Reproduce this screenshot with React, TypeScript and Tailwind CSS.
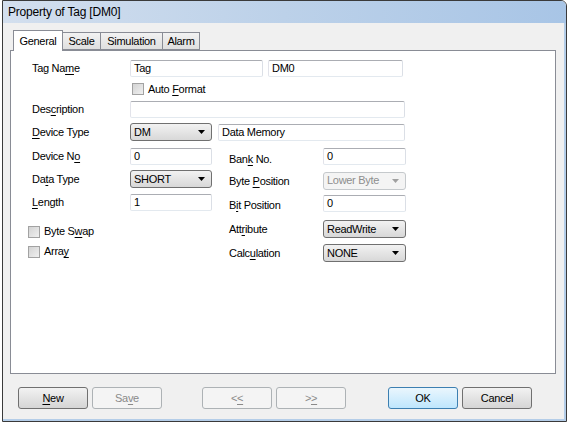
import React from 'react';

const font = "font-['Liberation_Sans',Arial,sans-serif] text-[11px] leading-[13px] tracking-[-0.3px] text-black";

const U: React.FC<{ children: React.ReactNode }> = ({ children }) => (
  <span className="underline underline-offset-[2px]">{children}</span>
);

const TextBox: React.FC<{ value?: string; w: string }> = ({ value = '', w }) => (
  <div className={`${w} h-[17px] bg-white border border-[#abadb3] border-b-[#e3e9ef] border-l-[#e2e3ea] border-r-[#dbdfe6] rounded-[2px] flex items-center pl-[3px]`}>
    {value}
  </div>
);

const Combo: React.FC<{ value: string; w: string; disabled?: boolean }> = ({ value, w, disabled }) => (
  <div
    className={`${w} h-[18px] rounded-[3px] border flex items-center justify-between pl-[3px] pr-[6px] ${
      disabled
        ? 'border-[#c5c9cc] bg-[#f4f4f4] text-[#8d8d8d]'
        : 'border-[#707070] bg-gradient-to-b from-[#f2f2f2] to-[#d8d8d8]'
    }`}
  >
    <span>{value}</span>
    <svg width="7" height="4" viewBox="0 0 7 4">
      <path d="M0 0h7L3.5 4z" fill={disabled ? '#a0a0a0' : '#000'} />
    </svg>
  </div>
);

const Check: React.FC<{ children: React.ReactNode }> = ({ children }) => (
  <div className="flex items-center gap-[4px]">
    <div className="w-[12px] h-[12px] border border-[#a2a2a2] bg-gradient-to-br from-[#d3d3d3] to-[#f0f0f0]" />
    <span>{children}</span>
  </div>
);

const Btn: React.FC<{ children: React.ReactNode; kind?: 'normal' | 'disabled' | 'default' }> = ({ children, kind = 'normal' }) => {
  const cls =
    kind === 'disabled'
      ? 'border-[#adb2b5] bg-[#f4f4f4] text-[#8a8a8a]'
      : kind === 'default'
      ? 'border-[#3c7fb1] bg-gradient-to-b from-[#eaf6fd] to-[#bee6fd]'
      : 'border-[#707070] bg-gradient-to-b from-[#f2f2f2] to-[#d5d5d5]';
  return (
    <div className={`w-[70px] h-[22px] rounded-[3px] border flex items-center justify-center ${cls}`}>{children}</div>
  );
};

const tab = 'h-[18px] border border-[#898c95] border-l-0 bg-gradient-to-b from-[#f2f2f2] to-[#dfdfdf] flex items-center justify-center';

export default function App() {
  return (
    <div className={`w-[570px] h-[425px] bg-white overflow-hidden ${font}`}>
      <div className="ml-[2px] w-[565px] h-[422px] border border-[#3a3a3a] rounded-tr-[6px] overflow-hidden flex flex-col">
        <div className="h-[22px] shrink-0 bg-gradient-to-r from-[#d3dfee] via-[#bcd1e9] to-[#a8c5e6] flex items-center pl-[5px] text-[12px] tracking-[-0.2px]">
          Property of Tag [DM0]
        </div>
        <div className="flex-1 bg-[#f0f0f0] border-r-2 border-b-2 border-[#b4cde8] flex flex-col">
          {/* tabs */}
          <div className="h-[27px] pl-[10px] flex items-end">
            <div className="relative z-10 -mb-px w-[50px] h-[21px] bg-white border border-[#898c95] border-b-0 flex items-center justify-center">
              General
            </div>
            <div className={`w-[38px] ${tab}`}>Scale</div>
            <div className={`w-[62px] ${tab}`}>Simulation</div>
            <div className={`w-[37px] ${tab}`}>Alarm</div>
          </div>
          {/* panel */}
          <div className="ml-[7px] w-[546px] h-[324px] bg-white border border-[#898c95] relative">
            <div className="flex flex-col">
              <div className="mt-[9px] h-[17px] flex items-center">
                <div className="w-[119px] pl-[21px]">Tag Na<U>m</U>e</div>
                <TextBox w="w-[133px]" value="Tag" />
                <div className="w-[5px]" />
                <TextBox w="w-[135px]" value="DM0" />
              </div>
              <div className="mt-[6px] h-[12px] flex items-center pl-[121px]">
                <Check>Auto <U>F</U>ormat</Check>
              </div>
              <div className="mt-[6px] h-[17px] flex items-center">
                <div className="w-[119px] pl-[21px]">Des<U>c</U>ription</div>
                <TextBox w="w-[275px]" />
              </div>
              <div className="mt-[5px] h-[18px] flex items-center">
                <div className="w-[119px] pl-[21px]"><U>D</U>evice Type</div>
                <Combo w="w-[82px]" value="DM" />
                <div className="w-[6px]" />
                <TextBox w="w-[187px]" value="Data Memory" />
              </div>
              {/* two-column area */}
              <div className="mt-[7px] flex">
                <div className="w-[201px] flex flex-col">
                  <div className="h-[17px] flex items-center">
                    <div className="w-[119px] pl-[21px]">Device N<U>o</U></div>
                    <TextBox w="w-[82px]" value="0" />
                  </div>
                  <div className="mt-[5px] h-[18px] flex items-center">
                    <div className="w-[119px] pl-[21px]">Da<U>t</U>a Type</div>
                    <Combo w="w-[82px]" value="SHORT" />
                  </div>
                  <div className="mt-[6px] h-[17px] flex items-center">
                    <div className="w-[119px] pl-[21px]"><U>L</U>ength</div>
                    <TextBox w="w-[82px]" value="1" />
                  </div>
                  <div className="mt-[14px] pl-[17px] flex flex-col gap-[7px]">
                    <Check>Byte S<U>w</U>ap</Check>
                    <Check>Arra<U>y</U></Check>
                  </div>
                </div>
                <div className="flex flex-col">
                  <div className="h-[17px] flex items-start">
                    <div className="w-[111px] pl-[17px] mt-[5px]">Ban<U>k</U> No.</div>
                    <TextBox w="w-[83px]" value="0" />
                  </div>
                  <div className="mt-[7px] h-[17px] flex items-center">
                    <div className="w-[111px] pl-[17px] mt-[2px]">Byte <U>P</U>osition</div>
                    <Combo w="w-[83px]" value="Lower Byte" disabled />
                  </div>
                  <div className="mt-[6px] h-[17px] flex items-center">
                    <div className="w-[111px] pl-[17px] mt-[3px]">B<U>i</U>t Position</div>
                    <TextBox w="w-[83px]" value="0" />
                  </div>
                  <div className="mt-[8px] h-[18px] flex items-center">
                    <div className="w-[111px] pl-[17px] mt-[1px]">Att<U>r</U>ibute</div>
                    <Combo w="w-[83px]" value="ReadWrite" />
                  </div>
                  <div className="mt-[6px] h-[18px] flex items-center">
                    <div className="w-[111px] pl-[17px] mt-[1px]">Calc<U>u</U>lation</div>
                    <Combo w="w-[83px]" value="NONE" />
                  </div>
                </div>
              </div>
            </div>
          </div>
          {/* buttons */}
          <div className="mt-[13px] flex items-center pl-[15px]">
            <Btn><U>N</U>ew</Btn>
            <div className="w-[4px]" />
            <Btn kind="disabled">Sa<U>v</U>e</Btn>
            <div className="w-[40px]" />
            <Btn kind="disabled">&lt;<U>&lt;</U></Btn>
            <div className="w-[4px]" />
            <Btn kind="disabled">&gt;<U>&gt;</U></Btn>
            <div className="w-[42px]" />
            <Btn kind="default">OK</Btn>
            <div className="w-[4px]" />
            <Btn>Cancel</Btn>
          </div>
        </div>
      </div>
    </div>
  );
}
